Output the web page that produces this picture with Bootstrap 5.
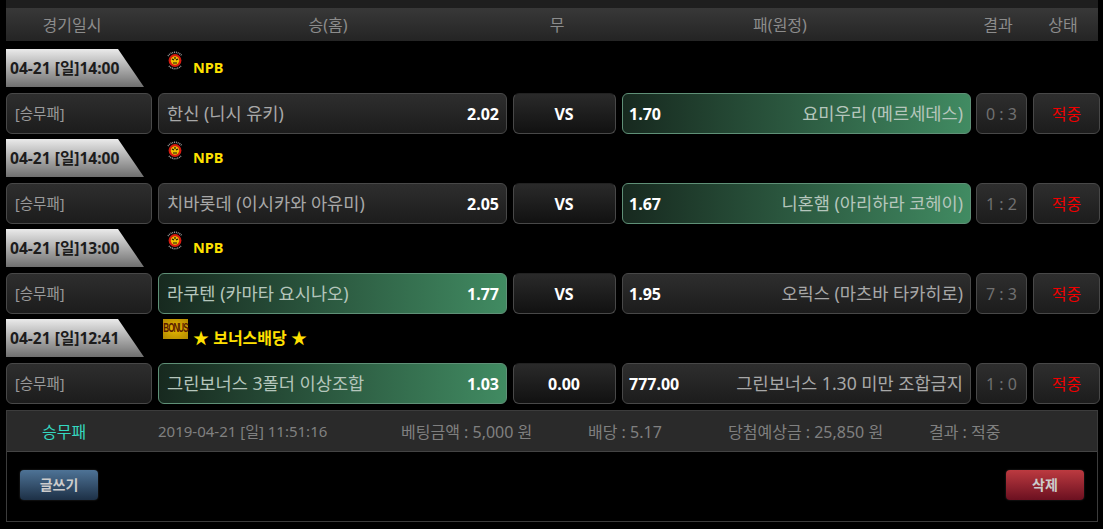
<!DOCTYPE html>
<html lang="ko"><head><meta charset="utf-8"><title>베팅내역</title>
<link rel="stylesheet" href="https://cdn.jsdelivr.net/npm/bootstrap@5.3.0/dist/css/bootstrap.min.css">
<style>
html,body{background:#000;height:529px;overflow:hidden}
body{font-family:"Noto Sans","Noto Sans CJK KR",sans-serif;font-size:14px;color:#999}
.sheet{padding:0 3px 0 6px;width:1103px}
.topstrip{height:8px;background:#1e1e1e;width:1092px}
.headbar{height:33px;width:1092px;background:linear-gradient(#383838,#242424);color:#8c8c8c;display:grid;grid-template-columns:132px 380px 78px 368px 68px 62px 4px;align-items:center;text-align:center;line-height:1;font-size:16px}
.dayrow{height:38px;margin-top:5px;display:flex}
.headbar + .dayrow{margin-top:8px}
.daytag{width:138px;height:38px;background:linear-gradient(#eaeaea,#6f6f6f);clip-path:polygon(0 0,112px 0,138px 100%,0 100%);color:#1c1c1c;font-weight:700;font-size:15.6px;line-height:38px;padding-left:4px;white-space:nowrap}
.leagueslot{position:relative;margin-left:14px;flex:1}
.leagueslot svg{position:absolute;left:7px;top:1px}
.leaguename{position:absolute;left:35px;top:8px;color:#ffe000;font-weight:700;font-size:14.5px;line-height:20px;white-space:nowrap}
.leaguename.bonusname{font-size:16px;top:9px}
.bonusmark{position:absolute;left:5px;top:0;width:25px;height:20px;background:radial-gradient(#e8b800,#b08800);display:flex;justify-content:center;align-items:center}
.bonusword{display:inline-block;transform:scaleY(1.7);color:#5a1a00;font:700 8px/10px "Liberation Sans",sans-serif;letter-spacing:-.9px}
.betrow{display:grid;grid-template-columns:146px 349px 103px 349px 50px 67px;column-gap:6px;height:41px;margin-top:6px}
.betrow>div{border:1px solid #484848;border-radius:6px;background:linear-gradient(#2e2e2e,#1c1c1c);display:flex;align-items:center;justify-content:space-between;padding:0 7px 0 6px;line-height:1;white-space:nowrap;font-size:17.6px;color:#a8a8a8}
.betrow>.kind{font-size:14.5px;padding-left:8px;color:#9a9a9a}
.betrow>.homecell{padding-left:8px}
.betrow>.picked{background:linear-gradient(90deg,#17291f,#418b62);border-color:#5f9077;color:#b5c6bc}
.betrow>.vs{justify-content:center;background:linear-gradient(#2a2a2a,#111);color:#fff;font-weight:700;border-top-color:#222;font-size:16px}
.betrow>.score{justify-content:center;color:#707070;font-size:16px;padding:0;margin-left:-1px}
.betrow>.state{justify-content:center;color:#ee0000;font-size:16px;padding:0}
.odd{color:#fff;font-weight:700;font-size:16px}
.summary{width:1092px;height:112px;margin-top:6px;border:1px solid #3c3c3c}
.sumhead{height:41px;background:#2a2a2a;border-bottom:1px solid #444;display:flex;align-items:center;position:relative;font-size:16px;color:#808080}
.sumhead span{position:absolute;white-space:nowrap;line-height:1;margin-top:1px}
.sumhead .sumkind{color:#35d8c0;left:35px}
.sumhead .sumdate{font-size:15px;left:151px}
.actions{display:flex;justify-content:space-between;padding:18px 13px 0 13px}
.actbtn{width:78px;height:30px;padding:0;border:0;border-radius:4px;font-size:14px;font-weight:700;color:#ccc;line-height:30px;box-shadow:0 0 2px #333}
.actblue{background:linear-gradient(#4e7396,#1d3046)}
.actred{background:linear-gradient(#bc3a40,#6b1020)}
</style></head>
<body>
<div class="sheet">
<div class="topstrip"></div>
<div class="headbar"><span>경기일시</span><span>승(홈)</span><span>무</span><span>패(원정)</span><span>결과</span><span>상태</span><span></span></div>

<div class="dayrow"><div class="daytag">04-21 [일]14:00</div><div class="leagueslot"><svg width="20" height="20" viewBox="0 0 20 20"><use href="#tiger"/></svg><span class="leaguename">NPB</span></div></div>
<div class="betrow"><div class="kind">[승무패]</div><div class="homecell"><span>한신 (니시 유키)</span><span class="odd">2.02</span></div><div class="vs">VS</div><div class="picked"><span class="odd">1.70</span><span>요미우리 (메르세데스)</span></div><div class="score">0 : 3</div><div class="state">적중</div></div>

<div class="dayrow"><div class="daytag">04-21 [일]14:00</div><div class="leagueslot"><svg width="20" height="20" viewBox="0 0 20 20"><use href="#tiger"/></svg><span class="leaguename">NPB</span></div></div>
<div class="betrow"><div class="kind">[승무패]</div><div class="homecell"><span>치바롯데 (이시카와 아유미)</span><span class="odd">2.05</span></div><div class="vs">VS</div><div class="picked"><span class="odd">1.67</span><span>니혼햄 (아리하라 코헤이)</span></div><div class="score">1 : 2</div><div class="state">적중</div></div>

<div class="dayrow"><div class="daytag">04-21 [일]13:00</div><div class="leagueslot"><svg width="20" height="20" viewBox="0 0 20 20"><use href="#tiger"/></svg><span class="leaguename">NPB</span></div></div>
<div class="betrow"><div class="kind">[승무패]</div><div class="picked homecell"><span>라쿠텐 (카마타 요시나오)</span><span class="odd">1.77</span></div><div class="vs">VS</div><div><span class="odd">1.95</span><span>오릭스 (마츠바 타카히로)</span></div><div class="score">7 : 3</div><div class="state">적중</div></div>

<div class="dayrow"><div class="daytag">04-21 [일]12:41</div><div class="leagueslot"><span class="bonusmark"><span class="bonusword">BONUS</span></span><span class="leaguename bonusname">★ 보너스배당 ★</span></div></div>
<div class="betrow"><div class="kind">[승무패]</div><div class="picked homecell"><span>그린보너스 3폴더 이상조합</span><span class="odd">1.03</span></div><div class="vs">0.00</div><div><span class="odd">777.00</span><span>그린보너스 1.30 미만 조합금지</span></div><div class="score">1 : 0</div><div class="state">적중</div></div>

<div class="summary">
<div class="sumhead"><span class="sumkind">승무패</span><span class="sumdate">2019-04-21 [일] 11:51:16</span><span style="left:394px">베팅금액 : 5,000 원</span><span style="left:581px">배당 : 5.17</span><span style="left:721px">당첨예상금 : 25,850 원</span><span style="left:922px">결과 : 적중</span></div>
<div class="actions"><button class="actbtn actblue" type="button">글쓰기</button><button class="actbtn actred" type="button">삭제</button></div>
</div>
</div>
<svg width="0" height="0" class="d-block"><defs><g id="tiger"><path d="M3 6a8.5 8.5 0 0 1 14 0M4 16a8 8 0 0 0 12 0" fill="none" stroke="#999" stroke-width="1.6" stroke-dasharray="1 .8"/><circle cx="10" cy="10.5" r="6.4" fill="#d81c10"/><circle cx="10" cy="10.5" r="4.2" fill="#f0c000"/><path d="M7 9l2 1M13 9l-2 1M8 13h4M10 7v2" stroke="#111" stroke-width="1.2"/></g></defs></svg>
<script src="https://cdn.jsdelivr.net/npm/bootstrap@5.3.0/dist/js/bootstrap.bundle.min.js"></script>
</body></html>
